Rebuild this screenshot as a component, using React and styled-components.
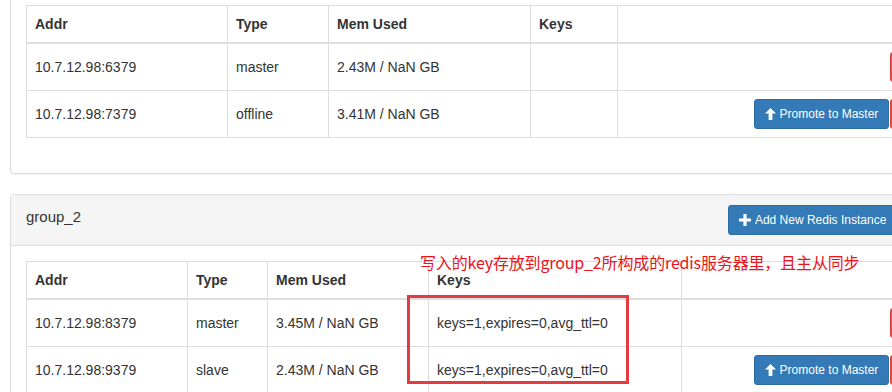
import React from "react";
import styled, { createGlobalStyle } from "styled-components";

const Global = createGlobalStyle`
  html, body { margin: 0; padding: 0; background: #fff; overflow: hidden; }
  body {
    font-family: "Liberation Sans", Arial, sans-serif;
    font-size: 14px;
    line-height: 20px;
    color: #333;
  }
`;

const Page = styled.div`
  width: 972px;
  padding-left: 10px;
  margin-top: -62px; /* scrolled: group_1 heading is above the window */
`;

const Panel = styled.div`
  position: relative;
  border: 1px solid #ddd;
  border-radius: 4px;
  background: #fff;
  margin-bottom: 20px;
  box-shadow: 0 1px 1px rgba(0, 0, 0, 0.05);
`;

const Heading = styled.div`
  display: flex;
  align-items: flex-start;
  justify-content: space-between;
  height: 30px;
  padding: 10px 15px;
  background: #f5f5f5;
  border-bottom: 1px solid #ddd;
  border-radius: 3px 3px 0 0;
`;

const Title = styled.div`
  font-size: 15px;
  line-height: 20px;
  padding-top: 2px;
  color: #333;
`;

const Tools = styled.div`
  display: flex;
  gap: 1px;
`;

const Body = styled.div`
  padding: 15px;
`;

const Table = styled.table`
  width: 100%;
  border-collapse: collapse;
  margin-bottom: 20px;
  border: 1px solid #ddd;

  th, td {
    border: 1px solid #ddd;
    padding: 8px;
    text-align: left;
    vertical-align: middle;
    line-height: 20px;
  }
  th {
    font-weight: bold;
    border-bottom-width: 2px;
  }
`;

const ActionCell = styled.td`
  && { text-align: right; white-space: nowrap; padding: 8px; }
  font-size: 0;
`;

const Btn = styled.button`
  display: inline-flex;
  align-items: center;
  gap: 4px;
  height: 30px;
  padding: 5px 10px;
  font-family: "Liberation Sans", Arial, sans-serif;
  font-size: 12px;
  line-height: 18px;
  color: #fff;
  border: 1px solid ${(p) => (p.$danger ? "#d43f3a" : "#2e6da4")};
  background: ${(p) => (p.$danger ? "#d9534f" : "#337ab7")};
  border-radius: 3px;
  cursor: pointer;
  white-space: nowrap;
  vertical-align: middle;
  & + & { margin-left: 1px; }
`;

const Note = styled.div`
  position: absolute;
  left: 409px;
  top: 57px;
  font-family: "Noto Sans CJK SC", "Liberation Sans", sans-serif;
  font-size: 16px;
  letter-spacing: -0.15px;
  line-height: 20px;
  color: #e8151b;
  white-space: nowrap;
`;

const Mark = styled.div`
  position: absolute;
  left: 396px;
  top: 100px;
  width: 216px;
  height: 83px;
  border: 3px solid #e33b40;
`;

const ArrowUp = () => (
  <svg width="11" height="12" viewBox="0 0 11 12" aria-hidden="true">
    <path d="M5.5 0 L11 5.6 L7.4 5.6 L7.4 12 L3.6 12 L3.6 5.6 L0 5.6 Z" fill="#fff" />
  </svg>
);

const Plus = () => (
  <svg width="12" height="12" viewBox="0 0 12 12" aria-hidden="true">
    <path d="M4.4 0 H7.6 V4.4 H12 V7.6 H7.6 V12 H4.4 V7.6 H0 V4.4 H4.4 Z" fill="#fff" />
  </svg>
);

function Group({ name, widths, servers, children }) {
  return (
    <Panel>
      <Heading>
        <Title>{name}</Title>
        <Tools>
          <Btn>
            <Plus />
            Add New Redis Instance
          </Btn>
          <Btn $danger>Remove</Btn>
        </Tools>
      </Heading>
      <Body>
        <Table>
          <colgroup>
            {widths.map((w, i) => (
              <col key={i} style={{ width: w }} />
            ))}
            <col />
          </colgroup>
          <thead>
            <tr>
              <th>Addr</th>
              <th>Type</th>
              <th>Mem Used</th>
              <th>Keys</th>
              <th></th>
            </tr>
          </thead>
          <tbody>
            {servers.map((s) => (
              <tr key={s.addr}>
                <td>{s.addr}</td>
                <td>{s.type}</td>
                <td>{s.mem}</td>
                <td>{s.keys}</td>
                <ActionCell>
                  {s.type !== "master" && (
                    <Btn>
                      <ArrowUp />
                      Promote to Master
                    </Btn>
                  )}
                  <Btn $danger>Remove</Btn>
                </ActionCell>
              </tr>
            ))}
          </tbody>
        </Table>
      </Body>
      {children}
    </Panel>
  );
}

export default function App() {
  return (
    <>
      <Global />
      <Page>
        <Group
          name="group_1"
          widths={[201, 101, 202, 87]}
          servers={[
            { addr: "10.7.12.98:6379", type: "master", mem: "2.43M / NaN GB", keys: "" },
            { addr: "10.7.12.98:7379", type: "offline", mem: "3.41M / NaN GB", keys: "" },
          ]}
        />
        <Group
          name="group_2"
          widths={[161, 80, 161, 253]}
          servers={[
            { addr: "10.7.12.98:8379", type: "master", mem: "3.45M / NaN GB", keys: "keys=1,expires=0,avg_ttl=0" },
            { addr: "10.7.12.98:9379", type: "slave", mem: "2.43M / NaN GB", keys: "keys=1,expires=0,avg_ttl=0" },
          ]}
        >
          <Note>写入的key存放到group_2所构成的redis服务器里，且主从同步</Note>
          <Mark />
        </Group>
      </Page>
    </>
  );
}
